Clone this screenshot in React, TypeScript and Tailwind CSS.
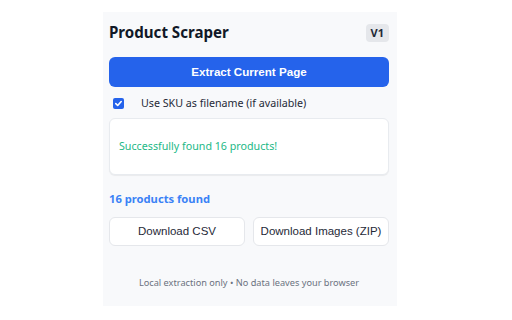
import React from "react";

export default function App() {
  const ui = { fontFamily: '"Noto Sans", "Open Sans", sans-serif' };
  const arial = { fontFamily: '"Liberation Sans", Arial, sans-serif' };
  return (
    <div className="w-[512px] h-[320px] bg-white pt-[12px] pl-[103px]" style={ui}>
      <div className="w-[294px] h-[294px] bg-[#f8f9fb] pt-[10px] pl-[6px] pr-[8px] flex flex-col">
        <div className="h-[22px] flex items-center justify-between">
          <span className="text-[15.1px] font-bold text-[#111827] leading-none">Product Scraper</span>
          <span className="h-[18px] px-[5px] flex items-center rounded-[4px] bg-[#e5e7eb] text-[11px] font-bold text-[#1f2937]">V1</span>
        </div>
        <button className="mt-[13px] h-[30px] w-full rounded-[6px] bg-[#2563eb] text-white text-[11.6px] font-bold" style={arial}>
          Extract Current Page
        </button>
        <div className="mt-[8px] h-[16px] flex items-center">
          <span className="ml-[4px] w-[11px] h-[11px] rounded-[2px] bg-[#2563eb] flex items-center justify-center">
            <svg width="9" height="9" viewBox="0 0 10 10">
              <path d="M2 5.2 L4.1 7.2 L8 2.8" stroke="white" strokeWidth="1.8" fill="none" strokeLinecap="round" strokeLinejoin="round" />
            </svg>
          </span>
          <span className="ml-[17px] text-[10.7px] text-[#1f2937]">Use SKU as filename (if available)</span>
        </div>
        <div className="mt-[7px] h-[57px] rounded-[6px] bg-white border border-[#e8ebef] shadow-[0_1px_1px_rgba(0,0,0,0.06)] flex items-center pl-[9px]">
          <span className="text-[10.7px] text-[#22b886]">Successfully found 16 products!</span>
        </div>
        <div className="mt-[16px] h-[16px] flex items-center">
          <span className="text-[11.2px] font-bold text-[#3b82f6]">16 products found</span>
        </div>
        <div className="mt-[10px] h-[29px] flex gap-[8px]">
          <button className="flex-1 rounded-[6px] bg-white border border-[#e5e7eb] text-[11.5px] text-[#1f2937]" style={arial}>
            Download CSV
          </button>
          <button className="flex-1 rounded-[6px] bg-white border border-[#e5e7eb] text-[11.5px] text-[#1f2937]" style={arial}>
            Download Images (ZIP)
          </button>
        </div>
        <div className="mt-[30px] h-[14px] flex items-center justify-center">
          <span className="text-[9.2px] text-[#6b7280]">Local extraction only • No data leaves your browser</span>
        </div>
      </div>
    </div>
  );
}
